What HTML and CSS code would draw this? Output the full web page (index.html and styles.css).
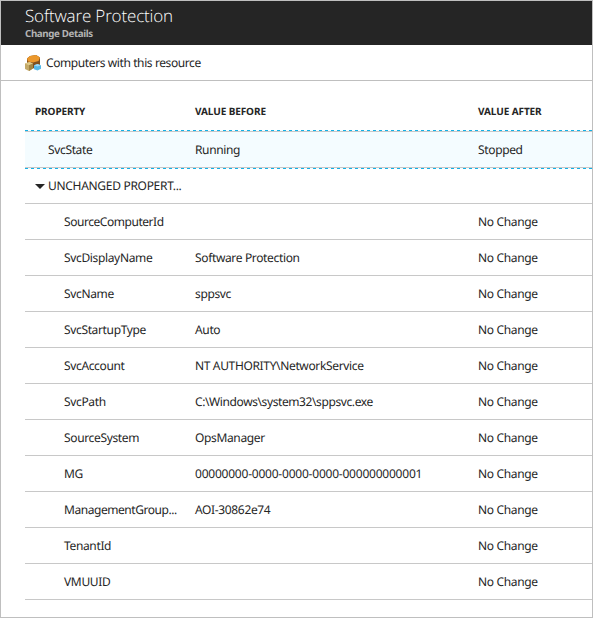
FILE: index.html
```html
<!DOCTYPE html>
<html lang="en">
<head>
<meta charset="utf-8">
<title>Software Protection</title>
<link rel="stylesheet" href="styles.css">
</head>
<body>
<main class="blade">
  <header class="blade-header">
    <h1 class="title">Software Protection</h1>
    <p class="subtitle">Change Details</p>
  </header>
  <div class="toolbar">
    <svg class="resource-icon" viewBox="0 0 16 16" width="16" height="16" aria-hidden="true">
      <path d="M2 3.500 5 1l6-1 4 2.500v7.500l-6 3.500L2 11z" fill="#80501f"/>
      <path d="M2 3.500 5 1l6-1 4 2.500-1.500 3.500-5.500 1.500-5-1z" fill="#ec982b"/>
      <path d="M0 8.500 4.500 7 8 8.500v5L4 16l-4-2z" fill="#c3a968"/>
      <path d="M0 8.500 4.500 7 8 8.500 4 10.200z" fill="#e0cb8b"/>
      <path d="M4 10.200 8 8.500v5L4 16z" fill="#a18443"/>
      <path d="M9 10.200 12.500 9l3.500 1.200v3.600L12.500 15.500l-3.500-1.300z" fill="#55b7e6"/>
      <path d="M9 10.200 12.500 9l3.500 1.200-3.500 1.400z" fill="#a3dbf4"/>
    </svg>
    <span class="toolbar-label">Computers with this resource</span>
  </div>
  <section class="grid">
    <div class="row head"><span>PROPERTY</span><span>VALUE BEFORE</span><span>VALUE AFTER</span></div>
    <div class="row selected"><span class="name">SvcState</span><span>Running</span><span>Stopped</span></div>
    <div class="row group"><span class="group-name"><svg class="caret" viewBox="0 0 10 5" width="10" height="5" aria-hidden="true"><path d="M0 0h10L5 5z"/></svg><span class="group-label">UNCHANGED PROPERT...</span></span></div>
    <div class="row"><span class="name tight">SourceComputerId</span><span></span><span>No Change</span></div>
    <div class="row"><span class="name">SvcDisplayName</span><span>Software Protection</span><span>No Change</span></div>
    <div class="row"><span class="name">SvcName</span><span>sppsvc</span><span>No Change</span></div>
    <div class="row"><span class="name">SvcStartupType</span><span>Auto</span><span>No Change</span></div>
    <div class="row"><span class="name">SvcAccount</span><span>NT AUTHORITY\NetworkService</span><span>No Change</span></div>
    <div class="row"><span class="name">SvcPath</span><span class="path">C:\Windows\system32\sppsvc.exe</span><span>No Change</span></div>
    <div class="row"><span class="name">SourceSystem</span><span>OpsManager</span><span>No Change</span></div>
    <div class="row"><span class="name">MG</span><span class="guid">00000000-0000-0000-0000-000000000001</span><span>No Change</span></div>
    <div class="row"><span class="name tight">ManagementGroup...</span><span>AOI-30862e74</span><span>No Change</span></div>
    <div class="row"><span class="name">TenantId</span><span></span><span>No Change</span></div>
    <div class="row"><span class="name">VMUUID</span><span></span><span>No Change</span></div>
  </section>
</main>
</body>
</html>
```
FILE: styles.css
```css
* { box-sizing: border-box; }
body { margin: 0; background: #fff; color: #252525; font: 12px/16px "Noto Sans", "Open Sans", sans-serif; letter-spacing: -0.35px; text-rendering: geometricPrecision; }
.blade { height: 618px; border: 1px solid #bfbfbf; overflow: hidden; }
.blade-header { height: 44px; padding: 4px 0 0 24px; background: #252525; }
.title { margin: 0; color: #fff; font: 300 17px/22px "Open Sans", sans-serif; letter-spacing: -0.15px; }
.subtitle { margin: 0; color: #b3b3b3; font-size: 9.75px; font-weight: 700; line-height: 14px; letter-spacing: -0.37px; }
.toolbar { display: flex; align-items: center; gap: 5px; height: 36px; padding-left: 24px; border-bottom: 1px solid #bfbfbf; }
.toolbar-label { padding-top: 1px; letter-spacing: -0.4px; }
.resource-icon { display: block; }
.grid { margin-left: 24px; }
.row { display: grid; grid-template-columns: 160px 283px 1fr; align-items: center; height: 36px; padding: 1px 0 0 10px; border-bottom: 1px solid #c8c8c8; white-space: nowrap; }
.head { height: 49px; padding-top: 11px; border: 0; font-size: 10px; font-weight: 700; letter-spacing: -0.1px; }
.selected { height: 39px; background: linear-gradient(#c8c8c8, #c8c8c8) 0 1px / 100% 1px no-repeat, linear-gradient(#c8c8c8, #c8c8c8) 0 37px / 100% 1px no-repeat, repeating-linear-gradient(90deg, #12b0e6 0 3px, #f4fcff 3px 6px) 0 0 / 100% 1px no-repeat, repeating-linear-gradient(90deg, #12b0e6 0 3px, #f4fcff 3px 6px) 0 38px / 100% 1px no-repeat, #f4fcff; border: 0; }
.name { padding-left: 29px; }
.selected .name { padding-left: 13px; }
.group { height: 35px; padding-top: 0; }
.group-name { display: flex; align-items: center; gap: 3px; }
.group-label { letter-spacing: -0.3px; }
.tight { letter-spacing: -0.45px; }
.path { letter-spacing: -0.4px; }
.guid { letter-spacing: -0.22px; }
.caret { fill: #252525; }
```
